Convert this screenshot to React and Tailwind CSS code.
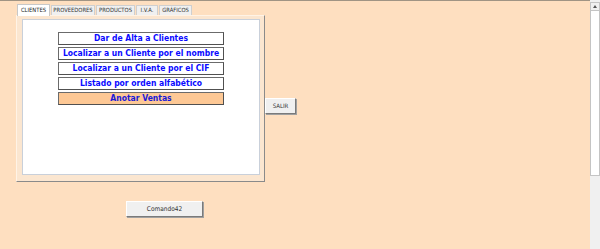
import React from 'react';

const tabs = [
  { label: 'CLIENTES', w: 'w-[33px]', active: true },
  { label: 'PROVEEDORES', w: 'w-[44px]' },
  { label: 'PRODUCTOS', w: 'w-[39px]' },
  { label: 'I.V.A.', w: 'w-[22px]' },
  { label: 'GRÁFICOS', w: 'w-[33px]' },
];

const opciones = [
  'Dar de Alta a Clientes',
  'Localizar a un Cliente por el nombre',
  'Localizar a un Cliente por el CIF',
  'Listado por orden alfabético',
];

const MenuButton = ({ children, orange }) => (
  <button
    className={
      'flex h-[13px] w-[166px] items-center justify-center whitespace-nowrap border border-[#6b6b6b] border-b-[#505050] border-r-[#505050] text-[8.5px] leading-none font-bold ' +
      (orange ? 'bg-[#fdc895] text-[#1a1ad8]' : 'bg-white text-[#0a0aff]')
    }
  >
    {children}
  </button>
);

const GrayButton = ({ children, className }) => (
  <button
    className={
      'flex items-center justify-center whitespace-nowrap border border-t-white border-l-white border-b-[#7a7a7a] border-r-[#7a7a7a] bg-[#f0f0f0] leading-none text-[#333] shadow-[1px_1px_0_#a0a0a0] ' +
      className
    }
  >
    {children}
  </button>
);

const TabControl = () => (
  <div className="flex w-[249px] flex-col">
    <div className="relative z-10 flex h-[10px] items-end pl-px">
      {tabs.map((t) =>
        t.active ? (
          <div
            key={t.label}
            className={`${t.w} -mb-px flex h-[12px] items-center justify-center border border-b-0 border-[#c8c8c8] bg-white text-[5.8px] leading-none text-[#222]`}
          >
            {t.label}
          </div>
        ) : (
          <div
            key={t.label}
            className={`${t.w} ml-px flex h-[10px] items-center justify-center border border-b-0 border-[#cfcfcf] bg-[#f0f0f0] text-[5.8px] leading-none text-[#333]`}
          >
            {t.label}
          </div>
        )
      )}
    </div>
    <div className="flex h-[167px] border border-t-[#fff3e6] border-l-[#fff3e6] border-b-[#8a8a8a] border-r-[#8a8a8a] bg-[#fbe6d0] pt-[3px] pr-[4px] pb-[6px] pl-[5px]">
      <div className="flex flex-1 flex-col gap-[2px] border border-[#c9d0da] bg-white pt-[12px] pl-[35px]">
        {opciones.map((o) => (
          <MenuButton key={o}>{o}</MenuButton>
        ))}
        <MenuButton orange>Anotar Ventas</MenuButton>
      </div>
    </div>
  </div>
);

const Scrollbar = () => (
  <div className="flex w-[10px] flex-col bg-[#f0f0f0] pt-[2px]">
    <div className="flex h-[174px] flex-col border border-[#c4c4c4] bg-white">
      <div className="flex h-[8px] items-center justify-center border-b border-[#c4c4c4] bg-[#f0f0f0]">
        <div className="h-0 w-0 border-x-[2px] border-b-[3px] border-x-transparent border-b-[#555]" />
      </div>
    </div>
  </div>
);

export default function App() {
  return (
    <div className="flex h-[249px] w-[600px] overflow-hidden bg-[#fedfc0] font-['DejaVu_Sans_Condensed','DejaVu_Sans',sans-serif]">
      <div className="flex flex-1 flex-col border-t border-[#a09484]">
        <div className="flex items-start pt-1 pl-4">
          <TabControl />
          <GrayButton className="mt-[93px] h-[16px] w-[31px] text-[6px]">SALIR</GrayButton>
        </div>
        <div className="pt-[19px] pl-[126px]">
          <GrayButton className="h-[16px] w-[77px] text-[6.5px]">Comando42</GrayButton>
        </div>
      </div>
      <Scrollbar />
    </div>
  );
}
